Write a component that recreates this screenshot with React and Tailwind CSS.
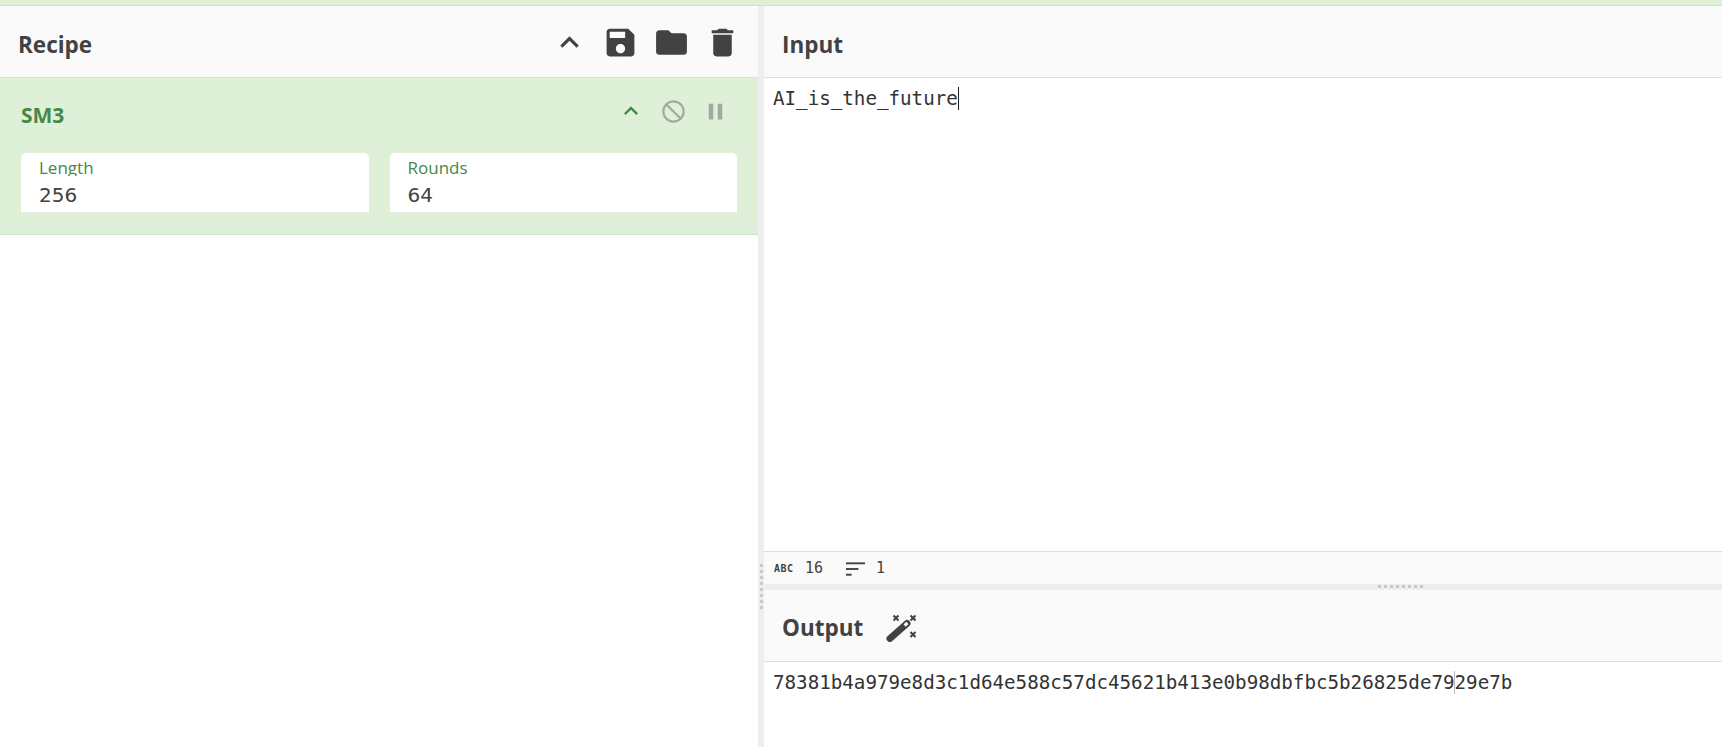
const SANS = "font-['Open_Sans','Noto_Sans',sans-serif]";

function Icon({ d, size, className }) {
	return (
		<svg viewBox="0 0 24 24" width={size} height={size} fill="currentColor" className={className}>
			<path d={d} />
		</svg>
	);
}

const ICONS = {
	up: 'M7.41 15.41L12 10.83l4.59 4.58L18 14l-6-6-6 6z',
	save: 'M17 3H5c-1.11 0-2 .9-2 2v14c0 1.1.89 2 2 2h14c1.1 0 2-.9 2-2V7l-4-4zm-5 16c-1.66 0-3-1.34-3-3s1.34-3 3-3 3 1.34 3 3-1.34 3-3 3zm3-10H5V5h10v4z',
	folder: 'M10 4H4c-1.1 0-1.99.9-1.99 2L2 18c0 1.1.9 2 2 2h16c1.1 0 2-.9 2-2V8c0-1.1-.9-2-2-2h-8l-2-2z',
	trash: 'M6 19c0 1.1.9 2 2 2h8c1.1 0 2-.9 2-2V7H6v12zM19 4h-3.5l-1-1h-5l-1 1H5v2h14V4z',
	block: 'M12 2C6.48 2 2 6.48 2 12s4.48 10 10 10 10-4.48 10-10S17.52 2 12 2zM4 12c0-4.42 3.58-8 8-8 1.85 0 3.55.63 4.9 1.69L5.69 16.9C4.63 15.55 4 13.85 4 12zm8 8c-1.85 0-3.55-.63-4.9-1.69L18.31 7.1C19.37 8.45 20 10.15 20 12c0 4.42-3.58 8-8 8z',
	pause: 'M6 19h4V5H6v14zm8-14v14h4V5h-4z',
};

function Wand() {
	return (
		<svg viewBox="0 0 30 30" width="30" height="30" className="text-[#424242]" fill="none" stroke="currentColor">
			<line x1="4" y1="26.500" x2="21" y2="11.500" strokeWidth="7" strokeLinecap="round" />
			<line x1="18.500" y1="13.500" x2="21.500" y2="11" strokeWidth="3" stroke="#fafafa" />
			<path d="M7.500 3.500l5 5m0-5l-5 5M24.500 3.500l5 5m0-5l-5 5M24.500 20l5 5m0-5l-5 5" strokeWidth="2" />
		</svg>
	);
}

function SortIcon() {
	return (
		<svg viewBox="0 0 20 14" width="19" height="14" fill="#424242">
			<rect x="0" y="0" width="20" height="2" />
			<rect x="0" y="6" width="13" height="2" />
			<rect x="0" y="12" width="6" height="2" />
		</svg>
	);
}

function Field({ label, value }) {
	return (
		<div className="flex-1 h-[60px] bg-white rounded-t-[5px] border-b border-[#e6eee2] px-[18px] pt-[5px]">
			<div className="text-[17px] leading-[20px] text-[#468847]">{label}</div>
			{/* the value box sits over the label's descenders */}
			<div className="relative bg-white mt-[-2px] pt-[5px] text-[20px] leading-[28px] text-[#424242] font-['DejaVu_Sans',sans-serif]">{value}</div>
		</div>
	);
}

function PanelHeader({ title, children }) {
	return (
		<div className="h-[72px] shrink-0 bg-[#fafafa] border-b border-[#dddddd] flex items-center pl-[18px] pt-[6px]">
			<span className="text-[22.5px] font-bold text-[#424242]">{title}</span>
			{children}
		</div>
	);
}

export default function App() {
	return (
		<div className={`h-[747px] w-[1722px] overflow-hidden flex flex-col bg-white ${SANS}`}>
			<div className="h-[6px] shrink-0 bg-[#dff0d8] border-b border-[#d5dfd0]" />
			<div className="flex-1 min-h-0 flex">
				{/* Recipe */}
				<div className="w-[758px] shrink-0 flex flex-col">
					<div className="h-[72px] shrink-0 bg-[#fafafa] border-b border-[#dddddd] flex items-center justify-between pl-[18px] pr-[10px]">
						<span className="text-[22.5px] font-bold text-[#424242] relative top-[3px]">Recipe</span>
						<div className="flex items-center text-[#424242] relative top-[1px]">
							{['up', 'save', 'folder', 'trash'].map((name) => (
								<div key={name} className="w-[51px] flex justify-center">
									<Icon d={ICONS[name]} size={37} />
								</div>
							))}
						</div>
					</div>
					<div className="h-[157px] shrink-0 bg-[#dff0d8] border-b border-[#d3e5cb] px-[21px] pt-[1px]">
						<div className="h-[74px] flex items-center justify-between">
							<span className="text-[21px] font-bold text-[#468847]">SM3</span>
							<div className="flex items-center relative top-[-5px] left-[-1px]">
								<div className="w-[42px] flex justify-center text-[#468847]"><Icon d={ICONS.up} size={28} /></div>
								<div className="w-[42px] flex justify-center text-[#a3a9a0]"><Icon d={ICONS.block} size={27} className="-scale-x-100" /></div>
								<div className="w-[42px] flex justify-center text-[#a3a9a0]"><Icon d={ICONS.pause} size={27} /></div>
							</div>
						</div>
						<div className="flex gap-[21px]">
							<Field label="Length" value="256" />
							<Field label="Rounds" value="64" />
						</div>
					</div>
				</div>

				{/* Divider */}
				<div className="w-[6px] shrink-0 bg-[#eeeeee] relative">
					<div className="absolute left-[2px] top-[558px] h-[46px] w-[3px] bg-[repeating-linear-gradient(to_bottom,#c8c8c8_0,#c8c8c8_3px,transparent_3px,transparent_6px)]" />
				</div>

				{/* Input / Output */}
				<div className="flex-1 min-w-0 flex flex-col">
					<PanelHeader title="Input" />
					<div className="flex-1 min-h-0 pl-[9px] pt-[8px] font-['DejaVu_Sans_Mono',monospace] text-[19.2px] leading-[26px] text-[#333333]">
						<span className="border-r border-[#222222]">AI_is_the_future</span>
					</div>
					<div className="h-[33px] shrink-0 bg-[#fafafa] border-t border-[#dddddd] flex items-center pl-[10px] pt-[1px] text-[15px] text-[#424242] font-['DejaVu_Sans_Mono',monospace]">
						<span className="text-[10px] font-bold leading-none tracking-[0.5px] w-[31px]">ABC</span>
						<span className="w-[41px]">16</span>
						<SortIcon />
						<span className="ml-[11px]">1</span>
					</div>
					<div className="h-[6px] shrink-0 bg-[#eeeeee] relative">
						<div className="absolute left-[614px] top-[1px] w-[46px] h-[3px] bg-[repeating-linear-gradient(to_right,#c8c8c8_0,#c8c8c8_3px,transparent_3px,transparent_6px)]" />
					</div>
					<div className="h-[72px] shrink-0 bg-[#fafafa] border-b border-[#dddddd] flex items-center pl-[18px] pt-[5px]">
						<span className="text-[22.5px] font-bold text-[#424242]">Output</span>
						<div className="ml-[23px] mt-[-3px]"><Wand /></div>
					</div>
					<div className="h-[85px] shrink-0 pl-[9px] pt-[8px] font-['DejaVu_Sans_Mono',monospace] text-[19.2px] leading-[26px] text-[#333333]">
						78381b4a979e8d3c1d64e588c57dc45621b413e0b98dbfbc5b26825de79<span className="border-l border-[#bbbbbb] -ml-px">29e7b</span>
					</div>
				</div>
			</div>
		</div>
	);
}
